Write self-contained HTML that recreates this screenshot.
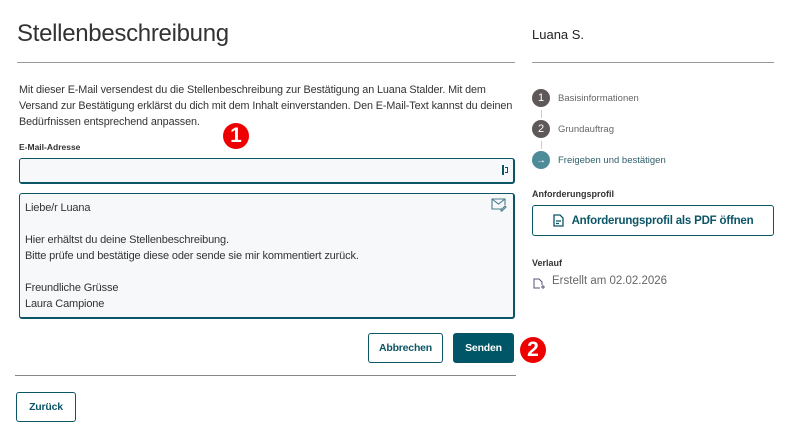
<!DOCTYPE html>
<html><head><meta charset="utf-8"><style>
*{box-sizing:border-box;margin:0;padding:0}
body{width:788px;height:432px;background:#fff;font-family:"Liberation Sans",sans-serif;color:#333;position:relative;overflow:hidden}
.a{position:absolute;white-space:nowrap}
.btn{position:absolute;border:1px solid #0b5566;border-radius:3px;color:#0b5566;font-weight:bold;font-size:10.5px;display:flex;align-items:center;justify-content:center;background:#fff;letter-spacing:-0.2px}
.badge{position:absolute;width:26px;height:26px;border-radius:50%;background:#e00;color:#fff;font-weight:bold;font-size:21px;display:flex;align-items:center;justify-content:center}
.circ{position:absolute;width:18px;height:18px;border-radius:50%;color:#fff;font-size:11px;display:flex;align-items:center;justify-content:center}
.st{font-size:9.5px;color:#666}
</style></head><body>
<div class="a" style="left:17px;top:20px;font-size:24px;color:#333;letter-spacing:-0.3px">Stellenbeschreibung</div>
<div class="a" style="left:17px;top:62px;width:498px;height:1px;background:#999"></div>
<div class="a" style="left:532px;top:27px;font-size:13px;color:#222">Luana S.</div>
<div class="a" style="left:532px;top:62px;width:242px;height:1px;background:#999"></div>
<div class="a" style="left:19px;top:82px;font-size:10.8px;letter-spacing:-0.1px;line-height:16px;color:#333">Mit dieser E-Mail versendest du die Stellenbeschreibung zur Bestätigung an Luana Stalder. Mit dem<br>Versand zur Bestätigung erklärst du dich mit dem Inhalt einverstanden. Den E-Mail-Text kannst du deinen<br>Bedürfnissen entsprechend anpassen.</div>
<div class="badge" style="left:223px;top:123px">1</div>
<div class="a" style="left:19px;top:142px;font-size:8.5px;font-weight:bold;color:#333">E-Mail-Adresse</div>
<div class="a" style="left:19px;top:158px;width:496px;height:26px;border:1px solid #0b5566;border-bottom-width:2px;border-right-width:2px;border-radius:3px;background:#f6f8fa"></div>
<div class="a" style="left:502px;top:165px;width:2px;height:10px;background:#0b5566"></div>
<div class="a" style="left:505px;top:167px;width:3px;height:6px;border:1px solid #0b5566;border-left:none"></div>
<div class="a" style="left:19px;top:193px;width:496px;height:126px;border:1px solid #0b5566;border-bottom-width:2px;border-right-width:2px;border-radius:3px;background:#f6f8fa"></div>
<svg class="a" style="left:491px;top:198px" width="16" height="14" viewBox="0 0 16 14"><path d="M11 11H1V1h13v6M1 1l6.5 5L14 1M10 12l4-4 1 1-4 4h-1z" fill="none" stroke="#4a7d8a" stroke-width="1.1"/></svg>
<div class="a" style="left:25px;top:200px;font-size:11px;letter-spacing:-0.15px;line-height:16px;color:#333">Liebe/r Luana<br><br>Hier erhältst du deine Stellenbeschreibung.<br>Bitte prüfe und bestätige diese oder sende sie mir kommentiert zurück.<br><br>Freundliche Grüsse<br>Laura Campione</div>
<div class="btn" style="left:368px;top:333px;width:75px;height:30px">Abbrechen</div>
<div class="btn" style="left:453px;top:333px;width:61px;height:30px;background:#005566;color:#fff">Senden</div>
<div class="badge" style="left:520px;top:337px">2</div>
<div class="a" style="left:15px;top:375px;width:501px;height:1px;background:#888"></div>
<div class="btn" style="left:16px;top:392px;width:60px;height:30px">Zurück</div>
<div class="circ" style="left:532px;top:89px;background:#5e5858">1</div>
<div class="a st" style="left:558px;top:93px">Basisinformationen</div>
<div class="a" style="left:541px;top:110px;width:1px;height:8px;background:#ccc"></div>
<div class="circ" style="left:532px;top:120px;background:#5e5858">2</div>
<div class="a st" style="left:558px;top:124px">Grundauftrag</div>
<div class="a" style="left:541px;top:141px;width:1px;height:8px;background:#ccc"></div>
<div class="circ" style="left:532px;top:151px;background:#4d8b99;font-size:10px">→</div>
<div class="a st" style="left:558px;top:155px;color:#2f5f6a">Freigeben und bestätigen</div>
<div class="a" style="left:532px;top:189px;font-size:9px;font-weight:bold;color:#333">Anforderungsprofil</div>
<div class="btn" style="left:532px;top:205px;width:242px;height:31px;font-size:11.5px;color:#0b5566"><svg width="11" height="13" viewBox="0 0 11 13" style="margin-right:8px"><path d="M1 1h6l3 3v8H1zM3 7h5M3 9.5h3" fill="none" stroke="#0b5566" stroke-width="1.3"/></svg>Anforderungsprofil als PDF öffnen</div>
<div class="a" style="left:532px;top:258px;font-size:9px;font-weight:bold;color:#333">Verlauf</div>
<svg class="a" style="left:533px;top:278px" width="12" height="12" viewBox="0 0 12 12"><path d="M7 10H1V1h5l3 3v3M8 9h4M10 7v4" fill="none" stroke="#557" stroke-width="1"/></svg>
<div class="a" style="left:552px;top:275px;font-size:11.5px;color:#666">Erstellt am 02.02.2026</div>
</body></html>
